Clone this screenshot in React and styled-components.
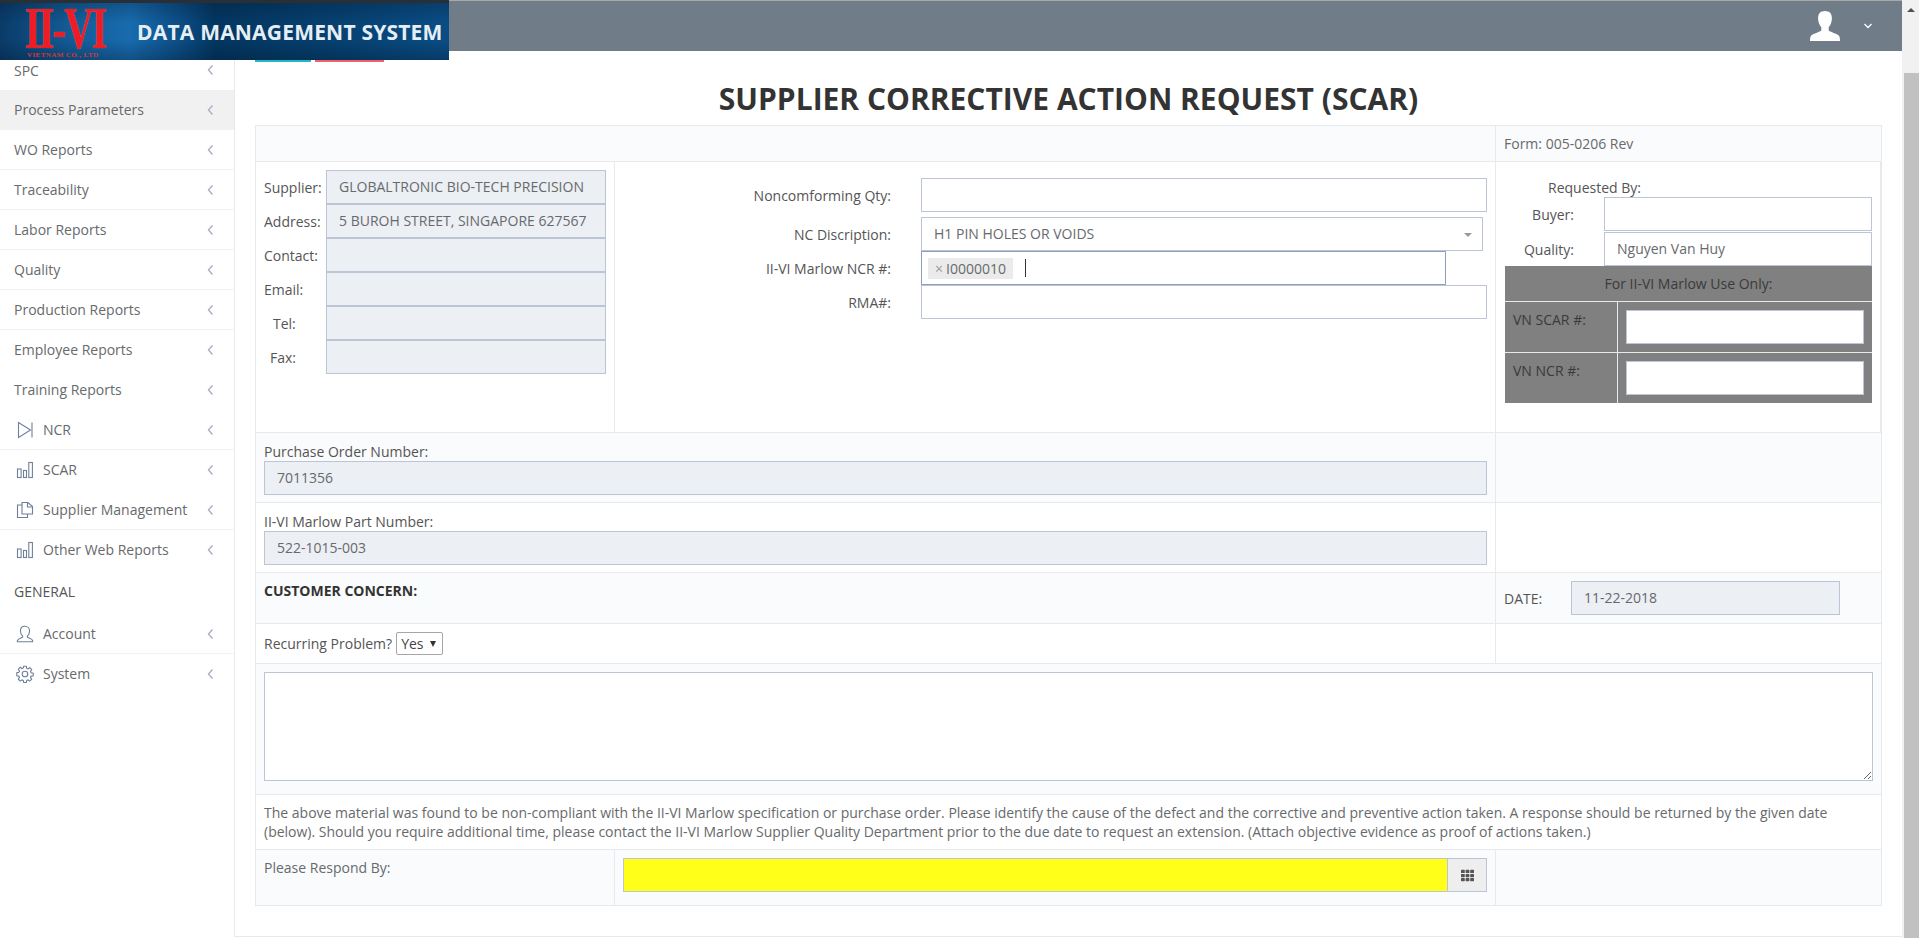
import React from "react";
import styled, { createGlobalStyle } from "styled-components";
import { FaTh } from "react-icons/fa";

const GlobalStyle = createGlobalStyle`
  html, body {
    margin: 0;
    padding: 0;
    height: 100%;
    overflow: hidden;
    background: #fff;
  }
  * { box-sizing: border-box; }
  body {
    font-family: "Open Sans", "Liberation Sans", sans-serif;
    font-size: 14px;
    line-height: 19px;
    color: #676a6c;
  }
`;

const menuTop = [
  { label: "SPC", short: true, line: false },
  { label: "Process Parameters", active: true, line: true },
  { label: "WO Reports", line: true },
  { label: "Traceability", line: true },
  { label: "Labor Reports", line: true },
  { label: "Quality", line: true },
  { label: "Production Reports", line: true },
  { label: "Employee Reports", line: false },
  { label: "Training Reports", line: false },
  { label: "NCR", icon: "play", line: true },
  { label: "SCAR", icon: "bars", line: false },
  { label: "Supplier Management", icon: "copy", line: true },
  { label: "Other Web Reports", icon: "bars", line: false },
];

const menuBottom = [
  { label: "Account", icon: "user", line: true },
  { label: "System", icon: "gear", line: false },
];

const supplierFields = [
  { label: "Supplier:", value: "GLOBALTRONIC BIO-TECH PRECISION" },
  { label: "Address:", value: "5 BUROH STREET, SINGAPORE 627567" },
  { label: "Contact:", value: "" },
  { label: "Email:", value: "" },
  { label: "Tel:", value: "", indent: 9 },
  { label: "Fax:", value: "", indent: 6 },
];

function MenuIcon({ name }) {
  if (name === "play") {
    return (
      <IconSvg viewBox="0 0 18 18">
        <path d="M2.500 1.500v15L14.500 9z" />
        <path d="M16 1.500v15" />
      </IconSvg>
    );
  }
  if (name === "bars") {
    return (
      <IconSvg viewBox="0 0 18 18">
        <rect x="1.500" y="8" width="3.600" height="8.500" />
        <rect x="7.500" y="9.500" width="3" height="7" />
        <rect x="12.800" y="1.500" width="3.600" height="15" />
      </IconSvg>
    );
  }
  if (name === "copy") {
    return (
      <IconSvg viewBox="0 0 18 18">
        <path d="M6 4H1.500v12.500h10V13" />
        <path d="M6 4V1.500h6l4.500 4V13H6z" />
        <path d="M11.500 1.500V6h5" />
      </IconSvg>
    );
  }
  if (name === "user") {
    return (
      <IconSvg viewBox="0 0 18 18">
        <path d="M6.600 11c-1.500-1.400-2.200-3.200-2.200-5C4.400 3.200 6.300 1.200 9 1.200s4.600 2 4.600 4.800c0 1.800-.7 3.600-2.200 5v1.300c1.800.9 4.800 1.500 5.200 3.200v1.200H1.400v-1.200c.4-1.700 3.400-2.300 5.200-3.200z" />
      </IconSvg>
    );
  }
  return (
    <IconSvg viewBox="0 0 18 18">
      <circle cx="9" cy="9" r="2.800" />
      <path d="M7.700 1.200h2.600l.4 2.100 1.300.6 1.800-1.200 1.900 1.900-1.200 1.800.6 1.300 2.100.4v2.600l-2.100.4-.6 1.300 1.200 1.800-1.900 1.900-1.800-1.200-1.300.6-.4 2.100H7.700l-.4-2.100-1.300-.6-1.800 1.200-1.900-1.900 1.200-1.800-.6-1.300-2.100-.4V7.700l2.100-.4.600-1.300-1.200-1.800 1.900-1.900L6 3.500l1.300-.6z" />
    </IconSvg>
  );
}

function MenuRow({ item }) {
  return (
    <MenuItem $active={item.active} $line={item.line} $short={item.short}>
      {item.icon && <MenuIcon name={item.icon} />}
      <MenuLabel>{item.label}</MenuLabel>
      <Chevron viewBox="0 0 7 12">
        <path d="M5.500 1.500L1.500 6l4 4.500" />
      </Chevron>
    </MenuItem>
  );
}

export default function App() {
  return (
    <>
      <GlobalStyle />
      <Window>
        <Page>
          <Logo>
            <LogoMark>
              <LogoLetters>II-VI</LogoLetters>
              <LogoSub>VIETNAM CO., LTD</LogoSub>
            </LogoMark>
            <LogoTitle>DATA MANAGEMENT SYSTEM</LogoTitle>
          </Logo>
          <Topbar>
            <svg width="30" height="30" viewBox="0 0 30 30" fill="#fff">
              <path d="M15 0c4.800 0 6.900 2.800 6.900 7.200 0 3.600-1.200 6.800-3.200 9v3.300c2.200 1.700 9.200 3.500 10.500 5.500.5.900.8 3.100.8 5H0c0-1.900.3-4.100.8-5 1.300-2 8.300-3.800 10.500-5.500v-3.300c-2-2.200-3.200-5.400-3.200-9C8.100 2.800 10.200 0 15 0z" />
            </svg>
            <CaretDown viewBox="0 0 10 6">
              <path d="M1.500 1l3.500 3.500L8.500 1" />
            </CaretDown>
          </Topbar>
          <Body>
            <Sidebar>
              {menuTop.map((item) => (
                <MenuRow key={item.label} item={item} />
              ))}
              <SectionTitle>GENERAL</SectionTitle>
              {menuBottom.map((item) => (
                <MenuRow key={item.label} item={item} />
              ))}
            </Sidebar>
            <Main>
              <ButtonStubs>
                <Stub $color="#23b7c5" $width={56} />
                <Stub $color="#e8636b" $width={69} />
              </ButtonStubs>
              <Title>SUPPLIER CORRECTIVE ACTION REQUEST (SCAR)</Title>
              <FormTable>
                <Row $striped $height={36}>
                  <Cell $span={2} />
                  <Cell $last>
                    <RowText>Form: 005-0206 Rev</RowText>
                  </Cell>
                </Row>
                <Row $height={271}>
                  <SupplierCell>
                    {supplierFields.map((field) => (
                      <SupplierRow key={field.label}>
                        <SupplierLabel $indent={field.indent}>{field.label}</SupplierLabel>
                        <Input $disabled $width="280px">{field.value}</Input>
                      </SupplierRow>
                    ))}
                  </SupplierCell>
                  <MiddleCell>
                    <MiddleRow $top={16}>
                      <MiddleLabel>Noncomforming Qty:</MiddleLabel>
                      <Input $width="566px" />
                    </MiddleRow>
                    <MiddleRow $top={5}>
                      <MiddleLabel>NC Discription:</MiddleLabel>
                      <Input $width="562px">
                        H1 PIN HOLES OR VOIDS
                        <SelectArrow />
                      </Input>
                    </MiddleRow>
                    <MiddleRow>
                      <MiddleLabel>II-VI Marlow NCR #:</MiddleLabel>
                      <TagInput>
                        <Tag>
                          <TagClose>×</TagClose>I0000010
                        </Tag>
                        <TextCaret />
                      </TagInput>
                    </MiddleRow>
                    <MiddleRow>
                      <MiddleLabel>RMA#:</MiddleLabel>
                      <Input $width="566px" />
                    </MiddleRow>
                  </MiddleCell>
                  <RequestCell>
                    <RequestedBy>Requested By:</RequestedBy>
                    <RequestRow>
                      <RequestLabel>Buyer:</RequestLabel>
                      <Input $width="268px" />
                    </RequestRow>
                    <RequestRow>
                      <RequestLabel>Quality:</RequestLabel>
                      <Input $width="268px">Nguyen Van Huy</Input>
                    </RequestRow>
                    <UseOnly>
                      <UseOnlyHead>For II-VI Marlow Use Only:</UseOnlyHead>
                      <UseOnlyRow>
                        <UseOnlyLabel>VN SCAR #:</UseOnlyLabel>
                        <UseOnlyField>
                          <Input />
                        </UseOnlyField>
                      </UseOnlyRow>
                      <UseOnlyRow>
                        <UseOnlyLabel>VN NCR #:</UseOnlyLabel>
                        <UseOnlyField>
                          <Input />
                        </UseOnlyField>
                      </UseOnlyRow>
                    </UseOnly>
                  </RequestCell>
                </Row>
                <Row $striped $height={70}>
                  <FieldCell $span={2}>
                    <FieldLabel>Purchase Order Number:</FieldLabel>
                    <Input $disabled>7011356</Input>
                  </FieldCell>
                  <Cell $last />
                </Row>
                <Row $height={70}>
                  <FieldCell $span={2}>
                    <FieldLabel>II-VI Marlow Part Number:</FieldLabel>
                    <Input $disabled>522-1015-003</Input>
                  </FieldCell>
                  <Cell $last />
                </Row>
                <Row $striped $height={51}>
                  <Cell $span={2}>
                    <Strong>CUSTOMER CONCERN:</Strong>
                  </Cell>
                  <DateCell $last>
                    <DateLabel>DATE:</DateLabel>
                    <Input $disabled $width="269px">11-22-2018</Input>
                  </DateCell>
                </Row>
                <Row $height={40}>
                  <RecurringCell $span={2}>
                    Recurring Problem?
                    <MiniSelect>
                      Yes
                      <MiniArrow />
                    </MiniSelect>
                  </RecurringCell>
                  <Cell $last />
                </Row>
                <Row $striped $height={131}>
                  <Cell $span={3} $last>
                    <TextArea />
                  </Cell>
                </Row>
                <Row $height={55}>
                  <Cell $span={3} $last>
                    The above material was found to be non-compliant with the II-VI Marlow
                    specification or purchase order. Please identify the cause of the defect and the
                    corrective and preventive action taken. A response should be returned by the
                    given date (below). Should you require additional time, please contact the II-VI
                    Marlow Supplier Quality Department prior to the due date to request an
                    extension. (Attach objective evidence as proof of actions taken.)
                  </Cell>
                </Row>
                <Row $striped $height={56}>
                  <Cell>Please Respond By:</Cell>
                  <RespondCell>
                    <YellowInput />
                    <AddOn>
                      <FaTh size={13} color="#555" />
                    </AddOn>
                  </RespondCell>
                  <Cell $last />
                </Row>
              </FormTable>
            </Main>
          </Body>
        </Page>
        <ScrollBar>
          <ScrollArrow />
          <ScrollThumb />
        </ScrollBar>
      </Window>
    </>
  );
}

const Window = styled.div`
  display: flex;
  width: 1919px;
  height: 938px;
  overflow: hidden;
`;

const Page = styled.div`
  position: relative;
  flex: 1;
  display: flex;
  flex-direction: column;
  min-width: 0;
`;

const ScrollBar = styled.div`
  width: 17px;
  background: #f1f1f1;
  display: flex;
  flex-direction: column;
  align-items: flex-end;
`;

const ScrollArrow = styled.div`
  align-self: center;
  margin: 8px 0 61px;
  border-left: 4px solid transparent;
  border-right: 4px solid transparent;
  border-bottom: 4px solid #505050;
  height: 4px;
`;

const ScrollThumb = styled.div`
  width: 15px;
  flex: 1;
  background: #c1c1c1;
`;

const Topbar = styled.header`
  height: 51px;
  flex: none;
  background: #717c89;
  border-top: 1px solid #a8a8a8;
  display: flex;
  align-items: center;
  justify-content: flex-end;
  gap: 23px;
  padding: 0 29px 0 0;
`;

const CaretDown = styled.svg`
  width: 10px;
  height: 6px;
  fill: none;
  stroke: #fff;
  stroke-width: 1.3;
`;

const Logo = styled.div`
  position: absolute;
  left: 0;
  top: 0;
  width: 449px;
  height: 60px;
  z-index: 2;
  display: flex;
  align-items: center;
  border-top: 3px solid #2a2f35;
  background:
    linear-gradient(180deg, rgba(0, 20, 40, 0.25) 0, rgba(0, 20, 40, 0) 35%, rgba(0, 20, 40, 0) 65%, rgba(0, 20, 40, 0.3) 100%),
    linear-gradient(90deg, #0a3b68 0, #125c96 70px, #186bae 130px, #0b4a80 185px, #033660 215px, #06406f 330px, #0a4d85 449px);
`;

const LogoMark = styled.div`
  width: 137px;
  flex: none;
  height: 57px;
  position: relative;
`;

const LogoLetters = styled.span`
  position: absolute;
  left: 25px;
  top: 3px;
  font-family: "Liberation Serif", serif;
  font-weight: 700;
  font-size: 60px;
  line-height: 44px;
  letter-spacing: -3px;
  color: #ee1c25;
  text-shadow: 0 0 1px #f7838a;
  transform: scaleX(0.68);
  transform-origin: left center;
  white-space: nowrap;
`;

const LogoSub = styled.span`
  position: absolute;
  left: 27px;
  top: 48px;
  font-family: "Liberation Serif", serif;
  font-weight: 700;
  font-size: 7px;
  line-height: 8px;
  letter-spacing: 0.4px;
  color: #d8353c;
  white-space: nowrap;
`;

const LogoTitle = styled.span`
  font-family: "Open Sans", sans-serif;
  font-weight: 700;
  font-size: 21px;
  line-height: 22px;
  letter-spacing: 0.2px;
  color: #e6eef5;
  white-space: nowrap;
  margin-top: 1px;
`;

const Body = styled.div`
  flex: 1;
  display: flex;
  min-height: 0;
`;

const Sidebar = styled.nav`
  width: 235px;
  flex: none;
  background: #fff;
  border-right: 1px solid #e7eaec;
  height: 886px;
`;

const MenuItem = styled.div`
  display: flex;
  align-items: center;
  height: ${(p) => (p.$short ? "39px" : "40px")};
  padding: 0 20px 0 14px;
  background: ${(p) => (p.$active ? "#f1f1f1" : "transparent")};
  border-bottom: 1px solid ${(p) => (p.$line ? "#f1f3f5" : "transparent")};
`;

const IconSvg = styled.svg`
  width: 18px;
  height: 18px;
  flex: none;
  margin: 0 9px 0 2px;
  fill: none;
  stroke: #6f7f9a;
  stroke-width: 1.1;
`;

const MenuLabel = styled.span`
  flex: 1;
  color: #676a6c;
  white-space: nowrap;
`;

const Chevron = styled.svg`
  width: 7px;
  height: 12px;
  flex: none;
  fill: none;
  stroke: #a7b1c2;
  stroke-width: 1.4;
`;

const SectionTitle = styled.div`
  height: 44px;
  padding: 12px 14px 0;
  color: #555;
`;

const Main = styled.main`
  flex: 1;
  min-width: 0;
  padding: 0 20px;
  background: #fff;
  border-bottom: 1px solid #e7eaec;
  height: 886px;
`;

const ButtonStubs = styled.div`
  display: flex;
  gap: 4px;
  height: 11px;
`;

const Stub = styled.div`
  height: 11px;
  width: ${(p) => p.$width}px;
  background: ${(p) => p.$color};
`;

const Title = styled.h1`
  margin: 0;
  height: 63px;
  padding-top: 18px;
  text-align: center;
  font-size: 30px;
  line-height: 37px;
  font-weight: 700;
  color: #333;
  white-space: nowrap;
`;

const FormTable = styled.section`
  width: 1627px;
  border: solid #e7eaec;
  border-width: 1px 1px 0 1px;
`;

const Row = styled.div`
  display: grid;
  grid-template-columns: 359px 881px 1fr;
  height: ${(p) => p.$height}px;
  background: ${(p) => (p.$striped ? "#fafbfd" : "#fff")};
  border-bottom: 1px solid #e7eaec;
`;

const Cell = styled.div`
  grid-column: span ${(p) => p.$span || 1};
  padding: 8px;
  border-right: ${(p) => (p.$last ? "none" : "1px solid #e7eaec")};
  min-width: 0;
`;

const RowText = styled.span`
  display: block;
`;

const Input = styled.div`
  height: 34px;
  width: ${(p) => p.$width || "100%"};
  flex: none;
  position: relative;
  border: 1px solid #bcc5d6;
  background: ${(p) => (p.$disabled ? "#eceff4" : "#fff")};
  padding: 6px 12px;
  line-height: 20px;
  color: #676a6c;
  white-space: nowrap;
  overflow: hidden;
`;

const SupplierCell = styled(Cell)`
  padding: 8px 8px 0;
`;

const SupplierRow = styled.div`
  display: flex;
  align-items: center;
  height: 34px;
`;

const SupplierLabel = styled.span`
  width: 62px;
  flex: none;
  padding-left: ${(p) => p.$indent || 0}px;
  color: #555;
`;

const MiddleCell = styled(Cell)`
  padding: 0;
`;

const MiddleRow = styled.div`
  display: flex;
  align-items: center;
  margin-top: ${(p) => p.$top || 0}px;
`;

const MiddleLabel = styled.span`
  width: 276px;
  flex: none;
  text-align: right;
  margin-right: 30px;
  color: #555;
`;

const SelectArrow = styled.span`
  position: absolute;
  right: 10px;
  top: 15px;
  border-left: 4px solid transparent;
  border-right: 4px solid transparent;
  border-top: 4px solid #999;
`;

const TagInput = styled.div`
  width: 525px;
  height: 34px;
  border: 1px solid #8f9db8;
  background: #fff;
  display: flex;
  align-items: center;
  padding-left: 6px;
`;

const Tag = styled.span`
  display: flex;
  align-items: center;
  width: 85px;
  height: 21px;
  background: #ebebeb;
  padding-left: 7px;
  color: #676a6c;
`;

const TagClose = styled.span`
  color: #999;
  margin-right: 3px;
`;

const TextCaret = styled.span`
  width: 1px;
  height: 18px;
  background: #333;
  margin-left: 12px;
`;

const RequestCell = styled(Cell)`
  padding: 17px 8px 0 9px;
`;

const RequestedBy = styled.div`
  height: 18px;
  margin-left: 43px;
  line-height: 18px;
  color: #555;
`;

const RequestRow = styled.div`
  display: flex;
  align-items: center;
  justify-content: space-between;
  height: 34px;

  & + & {
    margin-top: 1px;
  }
`;

const RequestLabel = styled.span`
  width: 69px;
  flex: none;
  text-align: right;
  color: #555;
`;

const UseOnly = styled.div`
  background: #808080;
  color: #3a3a3a;
`;

const UseOnlyHead = styled.div`
  height: 36px;
  text-align: center;
  line-height: 36px;
  border-bottom: 1px solid #e7eaec;
`;

const UseOnlyRow = styled.div`
  display: grid;
  grid-template-columns: 113px 1fr;
  height: 51px;
  border-bottom: 1px solid #e7eaec;

  &:last-child {
    border-bottom: none;
    height: 50px;
  }
`;

const UseOnlyLabel = styled.div`
  padding: 8px;
  border-right: 1px solid #e7eaec;
`;

const UseOnlyField = styled.div`
  padding: 8px;
`;

const FieldCell = styled(Cell)`
  padding: 9px 8px 0;
`;

const FieldLabel = styled.div`
  height: 19px;
  color: #555;
`;

const Strong = styled.strong`
  color: #333;
`;

const DateCell = styled(Cell)`
  display: flex;
  align-items: center;
`;

const DateLabel = styled.span`
  width: 67px;
  flex: none;
  color: #555;
`;

const RecurringCell = styled(Cell)`
  display: flex;
  align-items: center;
  padding: 0 8px;
  color: #555;
`;

const MiniSelect = styled.div`
  display: flex;
  align-items: center;
  justify-content: space-between;
  width: 47px;
  height: 23px;
  margin-left: 4px;
  padding: 0 6px 0 4px;
  border: 1px solid #a6a6a6;
  border-radius: 2px;
  background: #fff;
  color: #444;
`;

const MiniArrow = styled.span`
  border-left: 3px solid transparent;
  border-right: 3px solid transparent;
  border-top: 6px solid #333;
`;

const TextArea = styled.textarea`
  display: block;
  width: 100%;
  height: 109px;
  border: 1px solid #bcc5d6;
  background: #fff;
  outline: none;
`;

const RespondCell = styled(Cell)`
  display: flex;
  align-items: flex-start;
`;

const YellowInput = styled.div`
  width: 825px;
  height: 34px;
  background: #ffff1a;
  border: 1px solid #bcc5d6;
`;

const AddOn = styled.div`
  width: 39px;
  height: 34px;
  display: flex;
  align-items: center;
  justify-content: center;
  background: #eee;
  border: 1px solid #bcc5d6;
  border-left: none;
`;
